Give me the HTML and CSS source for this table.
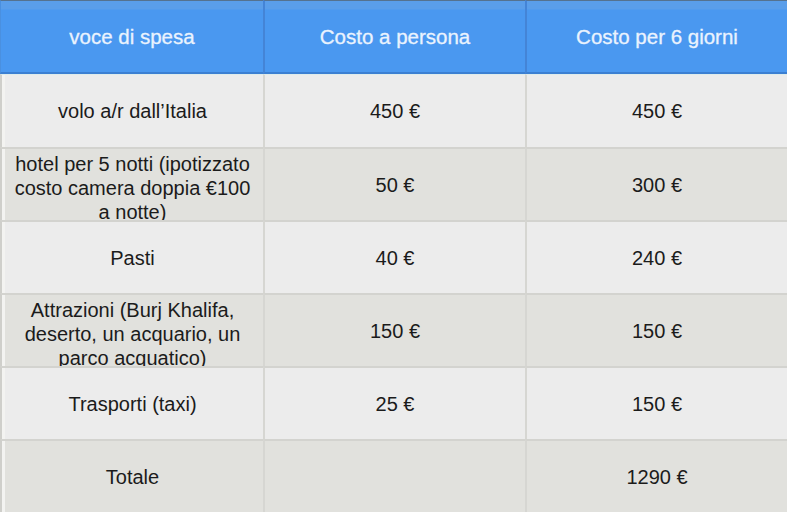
FILE: index.html
```html
<!DOCTYPE html>
<html lang="it">
<head>
<meta charset="utf-8">
<title>Costi</title>
<link rel="stylesheet" href="styles.css">
</head>
<body>
<div class="table">
  <div class="cell head first">voce di spesa</div>
  <div class="cell head">Costo a persona</div>
  <div class="cell head">Costo per 6 giorni</div>

  <div class="cell light first">volo a/r dall’Italia</div>
  <div class="cell light">450 €</div>
  <div class="cell light">450 €</div>

  <div class="cell dark first">hotel per 5 notti (ipotizzato costo camera doppia €100 a notte)</div>
  <div class="cell dark">50 €</div>
  <div class="cell dark">300 €</div>

  <div class="cell light first">Pasti</div>
  <div class="cell light">40 €</div>
  <div class="cell light">240 €</div>

  <div class="cell dark first">Attrazioni (Burj Khalifa, deserto, un acquario, un parco acquatico)</div>
  <div class="cell dark">150 €</div>
  <div class="cell dark">150 €</div>

  <div class="cell light first">Trasporti (taxi)</div>
  <div class="cell light">25 €</div>
  <div class="cell light">150 €</div>

  <div class="cell dark first">Totale</div>
  <div class="cell dark"></div>
  <div class="cell dark">1290 €</div>
</div>
</body>
</html>
```

FILE: styles.css
```css
html, body {
  margin: 0;
  padding: 0;
  background: #e1e1dd;
}
body {
  width: 787px;
  height: 512px;
  overflow: hidden;
  font-family: "Liberation Sans", Arial, Helvetica, sans-serif;
}
.table {
  display: grid;
  grid-template-columns: 263px 262px 262px;
  grid-template-rows: 74px repeat(6, 73px);
}
.cell {
  box-sizing: border-box;
  display: flex;
  align-items: safe center;
  justify-content: center;
  text-align: center;
  overflow: hidden;
  padding: 2.5px 6px;
  font-size: 20px;
  line-height: 24px;
  color: #1b1b1b;
  border-top: 2px solid #d3d3cf;
  border-left: 2px solid #d6d6d2;
}
.cell.first {
  border-left: 2px solid #cfcfcb;
  box-shadow: inset 3px 0 0 #f3f3f1;
}
.light {
  background: #ececec;
}
.dark {
  background: #e1e1dd;
}
.head {
  background: linear-gradient(#5a9eea 0, #5a9eea 8px, #4a98f0 9px, #4a98f0 100%);
  color: #eaf3fe;
  font-size: 20.5px;
  -webkit-text-stroke: 0.3px #eaf3fe;
  padding: 0 6px;
  border-top: 1px solid #55728f;
  border-left: 2px solid #4484d6;
  border-bottom: 2px solid #3b7fd2;
}
.head.first {
  border-left: 1px solid #4a90e0;
  box-shadow: none;
}
.cell.light:nth-child(4),
.cell.light:nth-child(5),
.cell.light:nth-child(6) {
  border-top: 1px solid #dfeceb;
}
```
